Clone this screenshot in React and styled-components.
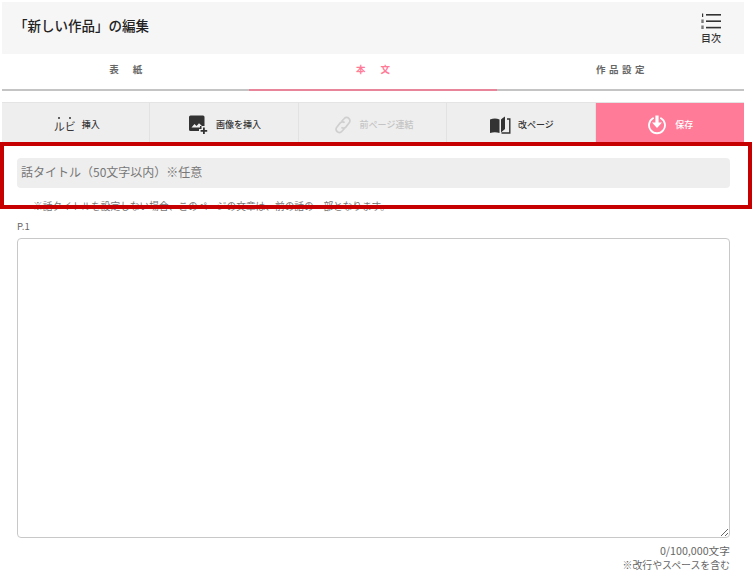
import React from "react";
import styled, { createGlobalStyle } from "styled-components";

const Global = createGlobalStyle`
  html, body { margin: 0; padding: 0; background: #fff; }
  body { font-family: "Noto Sans CJK JP", "Noto Sans", sans-serif; color: #333; }
  * { box-sizing: border-box; }
`;
const Page = styled.div`position: relative; width: 752px; height: 580px; overflow: hidden;`;
const Header = styled.header`
  margin: 2px 8px 0 2px; height: 52px; background: #f6f6f6;
  display: flex; align-items: center; justify-content: space-between; padding: 0 23px 0 12px;
`;
const Title = styled.h1`margin: 0 0 7px; font-size: 13.5px; line-height: 20px; font-weight: 500; color: #222;`;
const TocButton = styled.div`
  display: flex; flex-direction: column; align-items: center; gap: 2px; margin-bottom: 1px;
  font-size: 10px; line-height: 11px; color: #333; font-weight: 500;
`;
const Tabs = styled.nav`margin: 0 8px 0 2px; display: grid; grid-template-columns: repeat(3, 1fr); height: 37px;`;
const Tab = styled.div`
  display: flex; justify-content: center; padding-top: 8px; padding-left: ${p => p.$spacing};
  font-size: 9.5px; line-height: 14px; font-weight: 700; letter-spacing: ${p => p.$spacing};
  color: ${p => (p.$active ? "#ff7b98" : "#666")};
  border-bottom: 2px solid ${p => (p.$active ? "#e8859b" : "#c4c4c4")};
`;
const Toolbar = styled.div`margin: 11px 8px 0 2px; display: grid; grid-template-columns: repeat(5, 1fr); height: 40px;`;
const ToolButton = styled.button`
  border: 0; border-top: 1px solid #e4e4e4; border-right: 1px solid ${p => (p.$save ? "transparent" : "#e2e2e2")};
  padding: 4px 0 0 2px; font: inherit; display: flex; align-items: center; justify-content: center; gap: ${p => p.$gap || 8}px;
  background: ${p => (p.$save ? "#ff7b98" : "#eeeeee")};
  color: ${p => (p.$save ? "#fff" : p.$disabled ? "#c4c4c4" : "#333")};
  font-size: 9px; font-weight: 500;
  &:last-child { border-right: 0; }
`;
const RubyMark = styled.span`
  display: inline-flex; font-size: 11px; line-height: 16px; color: #333; font-weight: 400; padding-top: 3px;
`;
const RubyChar = styled.span`
  position: relative; display: block; width: 11px; text-align: center;
  &::before { content: ""; position: absolute; left: 4px; top: -1px; width: 2px; height: 2px; border-radius: 50%; background: #333; }
`;
const TitleSection = styled.section`padding: 16px 22px 0 17px;`;
const TitleInput = styled.input`
  display: block; width: 100%; height: 30px; border: 0; border-radius: 4px; background: #eeeeee;
  padding: 0 4px 3px; font: inherit; font-size: 12px; color: #333; outline: 0;
  &::placeholder { color: #777; opacity: 1; }
`;
const Note = styled.p`margin: 11px 0 0 16px; font-size: 9.7px; line-height: 15px; color: #777;`;
const EditorSection = styled.section`padding: 6px 22px 0 17px;`;
const PageLabel = styled.div`font-size: 9.5px; line-height: 12px; color: #666; margin-bottom: 6px;`;
const BodyArea = styled.textarea`
  display: block; width: 100%; height: 300px; border: 1px solid #c8c8c8; border-radius: 4px;
  background: #fff; padding: 6px; font: inherit; outline: 0;
`;
const Counter = styled.div`
  margin-top: 6px; text-align: right; font-size: 9.9px; line-height: 14px; color: #666;
`;
const CountLine = styled.span`display: block; font-size: 10.7px;`;
const Highlight = styled.div`
  position: absolute; left: 0; top: 142px; width: 752px; height: 67px;
  border: 4px solid #c60000; pointer-events: none;
`;

const TocIcon = () => (
  <svg width="20" height="17" viewBox="0 0 20 17">
    <g fill="#333">
      <rect x="5" y="1" width="15" height="1.6" />
      <rect x="5" y="7.4" width="15" height="1.6" />
      <rect x="5" y="13.8" width="15" height="1.6" />
      <rect x="1" y="0.5" width="1.2" height="3.5" />
      <rect x="0.3" y="6.5" width="2.4" height="3.5" opacity=".65" />
      <rect x="0.3" y="12.5" width="2.4" height="3.5" opacity=".65" />
    </g>
  </svg>
);
const ImageIcon = () => (
  <svg width="19" height="19" viewBox="0 0 19 19">
    <path d="M1.5 0.5H14a1.5 1.5 0 0 1 1.5 1.5V11H12.5V14H10V16H1.5A1.5 1.5 0 0 1 0 14.5V2A1.5 1.5 0 0 1 1.5.5Z" fill="#333" />
    <path d="M2.5 12.5L5.5 9L7.5 11L10 8.2L13 11H11V12.5H2.5Z" fill="#eee" />
    <path d="M14 12.5h1.8v2.4h2.4v1.8h-2.4v2.3H14v-2.3h-2.4v-1.8H14Z" fill="#333" />
  </svg>
);
const LinkIcon = () => (
  <svg width="18" height="18" viewBox="0 0 18 18" fill="none" stroke="#cfcfcf" strokeWidth="1.7">
    <path d="M7.5 5.5l2.8-3a3 3 0 0 1 4.6 0a3 3 0 0 1 .3 4.3l-3.4 4.3a3 3 0 0 1-4.4.2" />
    <path d="M10.5 12.5l-2.8 3a3 3 0 0 1-4.6 0a3 3 0 0 1-.3-4.3l3.4-4.3a3 3 0 0 1 4.4-.2" />
  </svg>
);
const BookIcon = () => (
  <svg width="21" height="18" viewBox="0 0 21 18">
    <path d="M0 3.5Q5 1.5 9.5 3.5V17Q5 15.3 0 17Z" fill="#333" />
    <path d="M11 3.5Q12.5 2 15 0.5V13L11 16.5V17H11Z" fill="#333" />
    <path d="M17 3H19.8V17H11.5" fill="none" stroke="#333" strokeWidth="1.4" />
  </svg>
);
const SaveIcon = () => (
  <svg width="18" height="20" viewBox="0 0 18 20" fill="none">
    <path d="M5 3.3A8 8 0 1 0 13 3.3" stroke="#fff" strokeWidth="1.8" strokeLinecap="round" />
    <path d="M7.4 0.5h3.2v7H14L9 13L4 7.5h3.4Z" fill="#fff" />
  </svg>
);

export default function App() {
  return (
    <Page>
      <Global />
      <Header>
        <Title>「新しい作品」の編集</Title>
        <TocButton><TocIcon />目次</TocButton>
      </Header>
      <Tabs>
        <Tab $spacing="14px">表紙</Tab>
        <Tab $active $spacing="15px">本文</Tab>
        <Tab $spacing="3.5px">作品設定</Tab>
      </Tabs>
      <Toolbar>
        <ToolButton $gap={6}>
          <RubyMark><RubyChar>ル</RubyChar><RubyChar>ビ</RubyChar></RubyMark>挿入
        </ToolButton>
        <ToolButton><ImageIcon />画像を挿入</ToolButton>
        <ToolButton $disabled><LinkIcon />前ページ連結</ToolButton>
        <ToolButton $gap={7}><BookIcon />改ページ</ToolButton>
        <ToolButton $save $gap={9}><SaveIcon />保存</ToolButton>
      </Toolbar>
      <TitleSection>
        <TitleInput placeholder="話タイトル（50文字以内）※任意" />
        <Note>※話タイトルを設定しない場合、このページの文章は、前の話の一部となります。</Note>
      </TitleSection>
      <EditorSection>
        <PageLabel>P.1</PageLabel>
        <BodyArea />
        <Counter><CountLine>0/100,000文字</CountLine>※改行やスペースを含む</Counter>
      </EditorSection>
      <Highlight />
    </Page>
  );
}
